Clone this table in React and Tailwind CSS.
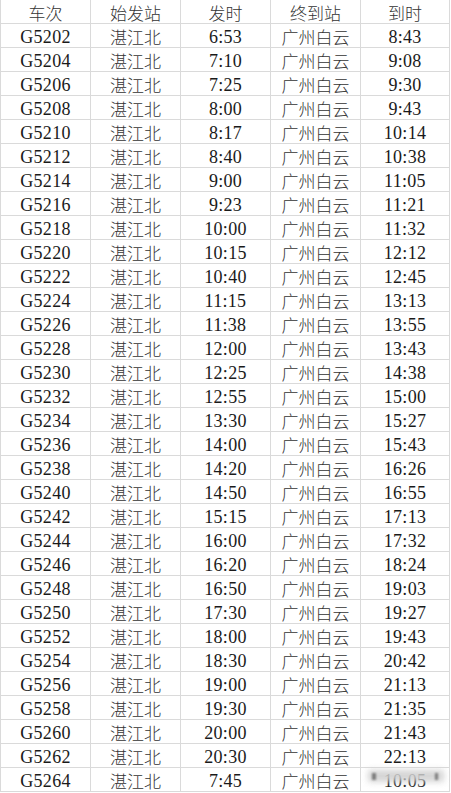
const rows = [
  ["G5202", "6:53", "8:43"],
  ["G5204", "7:10", "9:08"],
  ["G5206", "7:25", "9:30"],
  ["G5208", "8:00", "9:43"],
  ["G5210", "8:17", "10:14"],
  ["G5212", "8:40", "10:38"],
  ["G5214", "9:00", "11:05"],
  ["G5216", "9:23", "11:21"],
  ["G5218", "10:00", "11:32"],
  ["G5220", "10:15", "12:12"],
  ["G5222", "10:40", "12:45"],
  ["G5224", "11:15", "13:13"],
  ["G5226", "11:38", "13:55"],
  ["G5228", "12:00", "13:43"],
  ["G5230", "12:25", "14:38"],
  ["G5232", "12:55", "15:00"],
  ["G5234", "13:30", "15:27"],
  ["G5236", "14:00", "15:43"],
  ["G5238", "14:20", "16:26"],
  ["G5240", "14:50", "16:55"],
  ["G5242", "15:15", "17:13"],
  ["G5244", "16:00", "17:32"],
  ["G5246", "16:20", "18:24"],
  ["G5248", "16:50", "19:03"],
  ["G5250", "17:30", "19:27"],
  ["G5252", "18:00", "19:43"],
  ["G5254", "18:30", "20:42"],
  ["G5256", "19:00", "21:13"],
  ["G5258", "19:30", "21:35"],
  ["G5260", "20:00", "21:43"],
  ["G5262", "20:30", "22:13"],
  ["G5264", "7:45", "10:05"],
];

const cjk = "font-['Noto_Sans_CJK_SC',sans-serif] font-light text-[17px] text-[#333]";
const num = "font-['Liberation_Serif','Noto_Sans_CJK_SC',serif] text-[18px] text-[#1a1a1a] tracking-[0.3px]";
const cell = "flex h-6 items-center justify-center border-b border-r border-[#dadada] pt-[2px] leading-none";
const grid = "grid grid-cols-[90px_90px_90px_90px_89px]";

export default function App() {
  return (
    <div className="relative h-[793px] w-[451px] overflow-hidden bg-white">
      <div className="border-l border-[#dadada]">
        <div className={grid}>
          {["车次", "始发站", "发时", "终到站", "到时"].map((h) => (
            <div key={h} className={`${cell} ${cjk}`}>{h}</div>
          ))}
        </div>
        {rows.map(([no, dep, arr]) => (
          <div key={no} className={grid}>
            <div className={`${cell} ${num}`}>{no}</div>
            <div className={`${cell} ${cjk}`}>湛江北</div>
            <div className={`${cell} ${num}`}>{dep}</div>
            <div className={`${cell} ${cjk}`}>广州白云</div>
            <div className={`${cell} ${num}`}>{arr}</div>
          </div>
        ))}
      </div>
      {/* watermark smudge over the last cell */}
      <div className="pointer-events-none absolute left-[368px] top-[770px] h-[12px] w-[76px] bg-[#d0d0d0] opacity-90 blur-[3px]" />
      <div className="pointer-events-none absolute left-[372px] top-[773px] h-[7px] w-[4px] bg-[#555] opacity-70 blur-[1px]" />
      <div className="pointer-events-none absolute left-[435px] top-[773px] h-[7px] w-[3px] bg-[#555] opacity-70 blur-[1px]" />
    </div>
  );
}
